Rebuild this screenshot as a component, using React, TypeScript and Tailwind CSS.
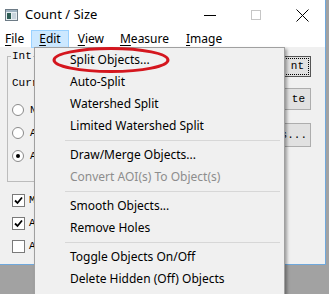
import React from "react";

const ui = { fontFamily: '"Noto Sans", "DejaVu Sans", sans-serif' };
const mono = { fontFamily: '"Liberation Mono", "DejaVu Sans Mono", monospace' };

type Entry = { label: string; disabled?: boolean } | "sep";

const entries: Entry[] = [
  { label: "Split Objects..." },
  { label: "Auto-Split" },
  { label: "Watershed Split" },
  { label: "Limited Watershed Split" },
  "sep",
  { label: "Draw/Merge Objects..." },
  { label: "Convert AOI(s) To Object(s)", disabled: true },
  "sep",
  { label: "Smooth Objects..." },
  { label: "Remove Holes" },
  "sep",
  { label: "Toggle Objects On/Off" },
  { label: "Delete Hidden (Off) Objects" },
];

const AppIcon = () => (
  <svg width="13" height="12" viewBox="0 0 13 12">
    <rect x="0.5" y="0.5" width="12" height="11" fill="#e8eef2" stroke="#6d7b86" />
    <rect x="1" y="1" width="11" height="2" fill="#9fb3c2" />
    <rect x="2" y="4" width="4" height="6" fill="#2e5d55" />
    <rect x="7" y="4" width="4" height="6" fill="#c7d3dc" />
  </svg>
);

const Radio = ({ checked }: { checked?: boolean }) => (
  <div className="w-[12px] h-[12px] rounded-full border border-[#8a8a8a] bg-white flex items-center justify-center">
    {checked && <div className="w-[4px] h-[4px] rounded-full bg-black" />}
  </div>
);

const Check = ({ checked }: { checked?: boolean }) => (
  <div className="w-[13px] h-[13px] border border-[#7a7a7a] bg-white flex items-center justify-center">
    {checked && (
      <svg width="9" height="9" viewBox="0 0 9 9">
        <path d="M1 4.5 L3.5 7 L8 1.5" fill="none" stroke="#000" strokeWidth="1.8" />
      </svg>
    )}
  </div>
);

const MenuItem = ({ u, rest }: { u: string; rest: string }) => (
  <span className="px-[7px] h-[18px] flex items-center">
    <span className="underline underline-offset-2">{u}</span>
    {rest}
  </span>
);

export default function App() {
  return (
    <div className="w-[329px] h-[294px] bg-[#a2a2a2] relative overflow-hidden" style={ui}>
      {/* window */}
      <div className="w-[326px] h-[265px] bg-[#f0f0f0] border-r border-b border-[#6fa8dc] flex flex-col">
        {/* title bar */}
        <div className="h-[30px] bg-white flex items-center pl-[5px] text-[13px] text-black">
          <AppIcon />
          <span className="ml-[7px]">Count / Size</span>
          <div className="ml-auto flex items-center">
            <div className="w-[46px] flex justify-center">
              <div className="w-[12px] h-px bg-black" />
            </div>
            <div className="w-[46px] flex justify-center">
              <div className="w-[10px] h-[10px] border border-[#c6c6c6]" />
            </div>
            <div className="w-[46px] flex justify-center">
              <svg width="13" height="13" viewBox="0 0 13 13">
                <path d="M0.5 0.5 L12.5 12.5 M12.5 0.5 L0.5 12.5" stroke="#000" strokeWidth="1" />
              </svg>
            </div>
          </div>
        </div>
        {/* menu bar */}
        <div className="h-[17px] bg-white flex items-center text-[12px] text-black">
          <div className="ml-[-2px]">
            <MenuItem u="F" rest="ile" />
          </div>
          <div className="bg-[#cce8ff] border border-[#99d1ff] h-[18px] flex items-center">
            <MenuItem u="E" rest="dit" />
          </div>
          <div className="ml-[2px]">
            <MenuItem u="V" rest="iew" />
          </div>
          <div className="ml-[2px]">
            <MenuItem u="M" rest="easure" />
          </div>
          <div className="ml-[3px]">
            <MenuItem u="I" rest="mage" />
          </div>
        </div>
        {/* body */}
        <div className="flex flex-1 text-[11px] text-black" style={mono}>
          <div className="flex flex-col pl-[7px] pt-[9px] w-[272px]">
            <div className="border border-[#bcbcbc] h-[126px] relative">
              <span className="absolute left-[3px] top-[-8px] bg-[#f0f0f0] px-px leading-[14px]">Int</span>
              <div className="pl-[4px] pt-[19px] h-[33px] leading-[14px]">Curr</div>
              <div className="flex flex-col gap-[9px] pl-[4px] pt-[13px]">
                <div className="flex items-center gap-[6px] h-[14px] leading-[14px]"><Radio />N</div>
                <div className="flex items-center gap-[6px] h-[14px] leading-[14px]"><Radio />A</div>
                <div className="flex items-center gap-[6px] h-[14px] leading-[14px]"><Radio checked />A</div>
              </div>
            </div>
            <div className="flex flex-col gap-[9px] pl-[5px] pt-[11px]">
              <div className="flex items-center gap-[4px] h-[14px] leading-[14px]"><Check checked />M</div>
              <div className="flex items-center gap-[4px] h-[14px] leading-[14px]"><Check checked />A</div>
              <div className="flex items-center gap-[4px] h-[14px] leading-[14px]"><Check />A</div>
            </div>
          </div>
          <div className="flex flex-col pt-[9px] pl-[4px]">
            <div className="w-[35px] h-[21px] bg-[#e1e1e1] border border-[#555] flex items-center p-px">
              <div className="w-full h-full border border-dotted border-black flex items-center justify-end pr-[4px]">nt</div>
            </div>
            <div className="w-[35px] h-[22px] mt-[11px] bg-[#e1e1e1] border border-[#adadad] flex items-center justify-end pr-[5px]">te</div>
            <div className="w-[35px] h-[24px] mt-[13px] bg-[#e1e1e1] border border-[#adadad] flex items-center justify-end pr-[3px]">s...</div>
          </div>
        </div>
      </div>

      {/* dropdown */}
      <div className="absolute left-[34px] top-[47px] w-[251px] h-[260px] bg-[#f0f0f0] border border-[#a0a0a0] shadow-[2px_2px_3px_rgba(0,0,0,0.35)] pt-[1px] text-[12px]">
        {entries.map((e, i) =>
          e === "sep" ? (
            <div key={i} className="h-[7px] flex items-center pl-[30px] pr-[4px]">
              <div className="h-px w-full bg-[#d7d7d7]" />
            </div>
          ) : (
            <div
              key={i}
              className={`h-[22px] flex items-center pl-[35px] ${e.disabled ? "text-[#8d8d8d]" : "text-black"}`}
            >
              {e.label}
            </div>
          )
        )}
      </div>

      {/* red highlight */}
      <svg className="absolute left-0 top-0 pointer-events-none" width="329" height="294">
        <ellipse cx="111" cy="60" rx="57" ry="11.5" fill="none" stroke="#d4161e" strokeWidth="3" />
      </svg>
    </div>
  );
}
